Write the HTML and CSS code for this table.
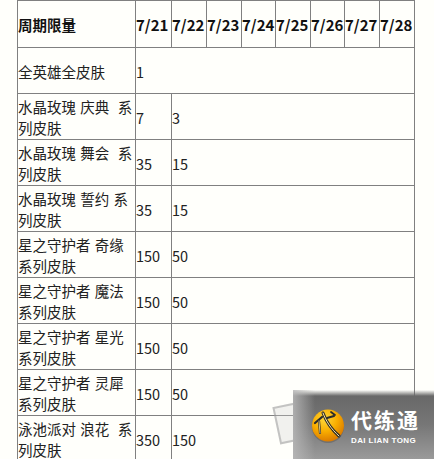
FILE: index.html
```html
<!DOCTYPE html>
<html lang="zh">
<head>
<meta charset="utf-8">
<link rel="stylesheet" href="styles.css">
</head>
<body>
<div class="page">
  <table class="limits">
    <colgroup>
      <col class="c-name"><col class="c-d1"><col class="c-d"><col class="c-d"><col class="c-d2"><col class="c-d"><col class="c-d2"><col class="c-d"><col class="c-d">
    </colgroup>
    <thead>
      <tr>
        <th class="h-name">周期限量</th>
        <th class="h-date">7/21</th>
        <th class="h-date">7/22</th>
        <th class="h-date">7/23</th>
        <th class="h-date">7/24</th>
        <th class="h-date">7/25</th>
        <th class="h-date">7/26</th>
        <th class="h-date">7/27</th>
        <th class="h-date">7/28</th>
      </tr>
    </thead>
    <tbody>
      <tr><td>全英雄全皮肤</td><td colspan="8">1</td></tr>
      <tr><td>水晶玫瑰 庆典&nbsp; 系列皮肤</td><td>7</td><td colspan="7">3</td></tr>
      <tr><td>水晶玫瑰 舞会&nbsp; 系列皮肤</td><td>35</td><td colspan="7">15</td></tr>
      <tr><td>水晶玫瑰 誓约 系列皮肤</td><td>35</td><td colspan="7">15</td></tr>
      <tr><td>星之守护者 奇缘 系列皮肤</td><td>150</td><td colspan="7">50</td></tr>
      <tr><td>星之守护者 魔法 系列皮肤</td><td>150</td><td colspan="7">50</td></tr>
      <tr><td>星之守护者 星光 系列皮肤</td><td>150</td><td colspan="7">50</td></tr>
      <tr><td>星之守护者 灵犀 系列皮肤</td><td>150</td><td colspan="7">50</td></tr>
      <tr><td>泳池派对 浪花&nbsp; 系列皮肤</td><td>350</td><td colspan="7">150</td></tr>
    </tbody>
  </table>

  <div class="watermark">
    <div class="ghost"></div>
    <div class="badge">
      <svg class="emblem" width="36" height="36" viewBox="0 0 36 36">
        <defs>
          <radialGradient id="og" cx="40%" cy="30%" r="70%">
            <stop offset="0" stop-color="#ffd83a"/>
            <stop offset="0.55" stop-color="#f8ad00"/>
            <stop offset="1" stop-color="#dc7c00"/>
          </radialGradient>
        </defs>
        <circle cx="18" cy="19" r="16" fill="#5a5a5a" opacity="0.5"/>
        <circle cx="18" cy="17.5" r="16" fill="url(#og)"/>
        <path d="M13 5 C16 13 21 21 29 28" stroke="#2b2b2b" stroke-width="3" fill="none" stroke-linecap="round"/>
        <path d="M13 5 C16 13 21 21 29 28" stroke="#ffe9a0" stroke-width="1" fill="none" stroke-linecap="round"/>
        <path d="M5 15 L12 9" stroke="#2b2b2b" stroke-width="2.2" fill="none" stroke-linecap="round"/>
        <path d="M9 13 L10 25" stroke="#2b2b2b" stroke-width="2.2" fill="none" stroke-linecap="round"/>
        <path d="M9 13 L10 25" stroke="#ffe9a0" stroke-width="0.8" fill="none" stroke-linecap="round"/>
        <path d="M17 10 L24 8" stroke="#2b2b2b" stroke-width="2" fill="none" stroke-linecap="round"/>
        <path d="M21 4 L25 7" stroke="#2b2b2b" stroke-width="1.8" fill="none" stroke-linecap="round"/>
      </svg>
      <div class="brand">
        <div class="brand-cn">代练通</div>
        <div class="brand-en">DAI LIAN TONG</div>
      </div>
    </div>
  </div>
</div>
</body>
</html>
```
FILE: styles.css
```css
html, body {
  margin: 0;
  padding: 0;
  background: #fffffb;
  overflow: hidden;
}

.page {
  position: relative;
  width: 434px;
  height: 459px;
  padding-left: 17px;
  box-sizing: border-box;
  overflow: hidden;
}

.limits {
  border-collapse: collapse;
  table-layout: fixed;
  width: 397px;
  font-family: "Noto Sans CJK SC", "Noto Sans", sans-serif;
  font-size: 14.5px;
  color: #222;
  word-spacing: 1px;
}

.c-name { width: 118px; }
.c-d1 { width: 36px; }
.c-d { width: 35px; }
.c-d2 { width: 34px; }

.limits th,
.limits td {
  border: 1px solid #808080;
  padding: 2px 0 1px 0;
  line-height: 21px;
  vertical-align: middle;
  text-align: left;
}

.limits thead tr { height: 47px; }
.limits tbody tr { height: 46px; }

.h-name {
  font-weight: bold;
  color: #111;
}

.h-date {
  font-family: "Noto Sans CJK SC", sans-serif;
  font-size: 15px;
  font-weight: bold;
  color: #111;
  white-space: nowrap;
  overflow: visible;
  padding-left: 1px;
}

.watermark {
  position: absolute;
  left: 270px;
  top: 390px;
  width: 164px;
  height: 69px;
}

.ghost {
  position: absolute;
  left: 6px;
  top: 14px;
  width: 24px;
  height: 34px;
  border: 2px solid rgba(140,140,140,0.45);
  background: rgba(210,210,210,0.3);
  transform: rotate(-12deg);
}

.badge {
  position: absolute;
  left: 23px;
  top: 0;
  right: 0;
  bottom: 0;
  display: flex;
  align-items: center;
  gap: 5px;
  padding: 3px 0 0 17px;
  box-sizing: border-box;
  background:
    linear-gradient(to right, rgba(185,185,185,0.85) 0, rgba(185,185,185,0) 22px),
    linear-gradient(to bottom, rgba(255,255,255,0) 0, #686868 6px, #777 35px, #9a9a9a 100%);
}

.emblem {
  flex: none;
}

.brand {
  display: flex;
  flex-direction: column;
  gap: 6px;
}

.brand-cn {
  font-family: "Noto Sans CJK SC", sans-serif;
  font-weight: bold;
  font-size: 21px;
  line-height: 22px;
  letter-spacing: 2px;
  color: #fff;
}

.brand-en {
  font-family: "Liberation Sans", sans-serif;
  font-weight: bold;
  font-size: 8px;
  line-height: 9px;
  letter-spacing: 0.4px;
  color: #fff;
}
```
